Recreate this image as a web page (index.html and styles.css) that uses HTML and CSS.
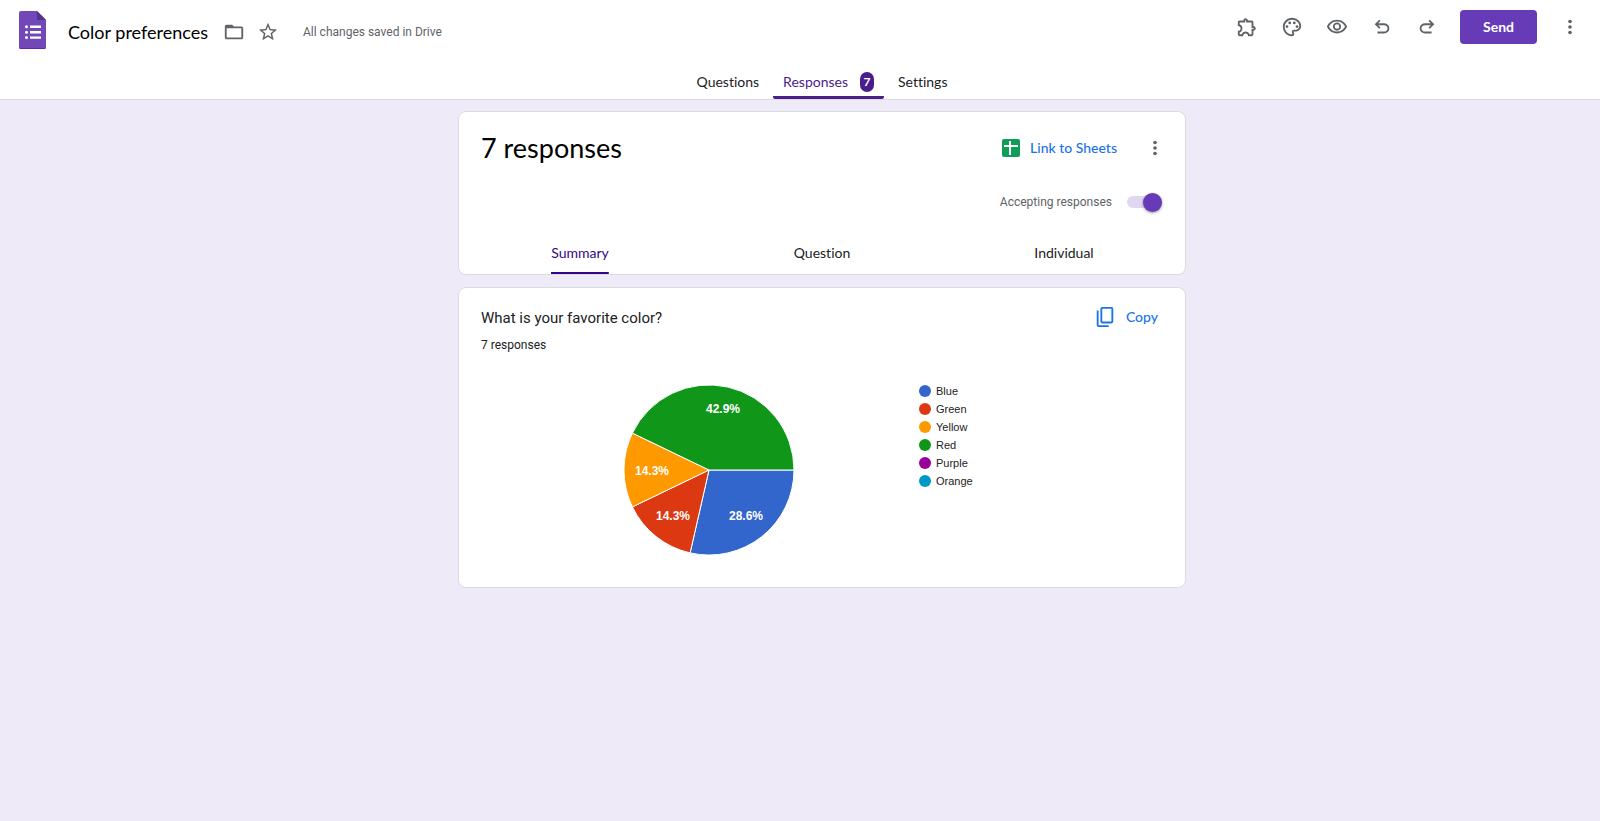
FILE: index.html
```
<!DOCTYPE html>
<html lang="en">
<head>
    <meta charset="UTF-8">
    <meta name="viewport" content="width=device-width, initial-scale=1.0">
    <title>Color preferences</title>
    <link rel="stylesheet" href="styles.css">
</head>
<body>

    <header class="header">
        <div class="topbar">
            <div class="doc">
                <a class="logo" href="#" aria-label="Forms home">
                    <svg width="27" height="38" viewBox="0 0 27 38">
                        <path d="M2 0H18L27 9V36a2 2 0 0 1-2 2H2a2 2 0 0 1-2-2V2a2 2 0 0 1 2-2z" fill="#7248b9"/>
                        <path d="M18 0L27 9H18z" fill="#4f328c"/>
                        <path d="M0 36a2 2 0 0 0 2 2H25a2 2 0 0 0 2-2v-.7a2 2 0 0 1-2 2H2a2 2 0 0 1-2-2z" fill="#5c1fb0"/>
                        <path d="M11 14.5h11v2.4H11zM11 20h11v2.4H11zM11 25.4h11v2.4H11z" fill="#fff"/>
                        <g fill="#fff">
                            <circle cx="7.5" cy="15.7" r="1.5"/>
                            <circle cx="7.5" cy="21.2" r="1.5"/>
                            <circle cx="7.5" cy="26.6" r="1.5"/>
                        </g>
                    </svg>
                </a>
                <div class="doc-info">
                    <h1 class="doc-title">Color preferences</h1>
                    <button class="icon-btn" type="button" aria-label="Move to folder">
                        <svg class="icon" viewBox="0 0 24 24"><path d="M20 6h-8l-2-2H4c-1.100 0-2 .9-2 2v12c0 1.100.9 2 2 2h16c1.100 0 2-.9 2-2V8c0-1.100-.9-2-2-2zm0 12H4V8h16v10z"/></svg>
                    </button>
                    <button class="icon-btn" type="button" aria-label="Star">
                        <svg class="icon" viewBox="0 0 24 24"><path d="M22 9.240l-7.190-.62L12 2 9.190 8.630 2 9.240l5.460 4.730L5.820 21 12 17.270 18.180 21l-1.630-7.030L22 9.240zM12 15.400l-3.760 2.270 1-4.280-3.320-2.880 4.380-.38L12 6.100l1.710 4.040 4.380.38-3.320 2.880 1 4.280L12 15.400z"/></svg>
                    </button>
                    <span class="saved">All changes saved in Drive</span>
                </div>
            </div>

            <div class="actions">
                <div class="tools">
                    <button class="icon-btn" type="button" aria-label="Add-ons">
                        <svg class="icon" viewBox="0 0 24 24"><path d="M10.500 4.500c.28 0 .5.22.5.5v2h6v6h2c.28 0 .5.22.5.5s-.22.5-.5.5h-2v6h-2.120c-.68-1.750-2.390-3-4.380-3s-3.700 1.250-4.380 3H4v-2.120c1.750-.68 3-2.390 3-4.380 0-1.990-1.240-3.700-2.990-4.380L4 7h6V5c0-.28.22-.5.5-.5m0-2C9.120 2.500 8 3.620 8 5H4c-1.100 0-1.990.9-1.990 2v3.800h.29c1.490 0 2.700 1.210 2.700 2.700s-1.210 2.700-2.700 2.700H2V20c0 1.100.9 2 2 2h3.800v-.3c0-1.490 1.210-2.700 2.700-2.700s2.700 1.210 2.700 2.700v.3H17c1.100 0 2-.9 2-2v-4c1.380 0 2.500-1.120 2.500-2.500S20.380 11 19 11V7c0-1.100-.9-2-2-2h-4c0-1.380-1.120-2.500-2.500-2.500z"/></svg>
                    </button>
                    <button class="icon-btn" type="button" aria-label="Customize theme">
                        <svg class="icon" viewBox="0 0 24 24">
                            <path d="M12 22C6.490 22 2 17.510 2 12S6.490 2 12 2s10 4.040 10 9c0 3.310-2.690 6-6 6h-1.770c-.28 0-.5.22-.5.5 0 .12.05.23.13.33.41.47.64 1.060.64 1.670A2.500 2.500 0 0 1 12 22zm0-18c-4.410 0-8 3.590-8 8s3.590 8 8 8c.28 0 .5-.22.5-.5a.54.54 0 0 0-.14-.35c-.41-.46-.63-1.050-.63-1.650a2.500 2.500 0 0 1 2.500-2.500H16c2.210 0 4-1.790 4-4 0-3.860-3.590-7-8-7z"/>
                            <circle cx="6.500" cy="11.500" r="1.500"/>
                            <circle cx="9.500" cy="7.500" r="1.500"/>
                            <circle cx="14.500" cy="7.500" r="1.500"/>
                            <circle cx="17.500" cy="11.500" r="1.500"/>
                        </svg>
                    </button>
                    <button class="icon-btn" type="button" aria-label="Preview">
                        <svg class="icon" viewBox="0 0 24 24"><path d="M12 6c3.790 0 7.170 2.130 8.820 5.500C19.170 14.870 15.790 17 12 17s-7.170-2.130-8.820-5.500C4.830 8.130 8.210 6 12 6m0-2C7 4 2.730 7.110 1 11.500 2.730 15.890 7 19 12 19s9.270-3.110 11-7.500C21.270 7.110 17 4 12 4zm0 5a2.500 2.500 0 0 1 0 5 2.500 2.500 0 0 1 0-5m0-2c-2.480 0-4.500 2.020-4.500 4.500S9.520 16 12 16s4.500-2.020 4.500-4.500S14.480 7 12 7z"/></svg>
                    </button>
                    <button class="icon-btn" type="button" aria-label="Undo">
                        <svg class="icon" viewBox="0 0 24 24"><path d="M7 19v-2h7.100q1.575 0 2.738-1T18 13.500T16.838 11T14.100 10H7.800l2.600 2.600L9 14L4 9l5-5l1.400 1.400L7.800 8h6.300q2.425 0 4.163 1.575T20 13.500t-1.737 3.925T14.100 19z"/></svg>
                    </button>
                    <button class="icon-btn" type="button" aria-label="Redo">
                        <svg class="icon" viewBox="0 0 24 24"><path d="M9.900 19q-2.425 0-4.163-1.575T4 13.500t1.737-3.925T9.900 8h6.300l-2.600-2.600L15 4l5 5l-5 5l-1.400-1.400l2.600-2.600H9.900q-1.575 0-2.738 1T6 13.500T7.162 16T9.900 17H17v2z"/></svg>
                    </button>
                </div>
                <button class="send" type="button">Send</button>
                <button class="icon-btn" type="button" aria-label="More">
                    <svg class="icon" viewBox="0 0 24 24"><circle cx="12" cy="6" r="2"/><circle cx="12" cy="12" r="2"/><circle cx="12" cy="18" r="2"/></svg>
                </button>
            </div>
        </div>

        <nav class="tabs">
            <a class="tab" href="#questions">Questions</a>
            <a class="tab tab-on" href="#responses">Responses <span class="count">7</span></a>
            <a class="tab" href="#settings">Settings</a>
        </nav>
    </header>

    <main class="main">
        <section class="card">
            <div class="card-head">
                <h2 class="total">7 responses</h2>
                <div class="card-actions">
                    <button class="link-btn" type="button">
                        <svg width="18" height="18" viewBox="0 0 18 18">
                            <rect width="18" height="18" rx="2" fill="#0f9d58"/>
                            <path d="M2 6h14v2H9v8H7V8H2zM7 2h2v4H7z" fill="#fff"/>
                        </svg>
                        Link to Sheets
                    </button>
                    <button class="icon-btn" type="button" aria-label="More options">
                        <svg class="icon" viewBox="0 0 24 24"><circle cx="12" cy="6" r="2"/><circle cx="12" cy="12" r="2"/><circle cx="12" cy="18" r="2"/></svg>
                    </button>
                </div>
            </div>
            <div class="accept">
                <label for="accepting">Accepting responses</label>
                <input class="switch" id="accepting" type="checkbox" role="switch" checked>
            </div>
            <nav class="views">
                <a class="view view-on" href="#summary">Summary</a>
                <a class="view" href="#question">Question</a>
                <a class="view" href="#individual">Individual</a>
            </nav>
        </section>

        <section class="card">
            <div class="question-head">
                <div>
                    <h3 class="question">What is your favorite color?</h3>
                    <p class="answers">7 responses</p>
                </div>
                <button class="link-btn" type="button">
                    <svg width="22" height="22" viewBox="0 0 24 24" fill="#1a73e8"><path d="M19 1H9a2 2 0 0 0-2 2v14a2 2 0 0 0 2 2h10a2 2 0 0 0 2-2V3a2 2 0 0 0-2-2zm0 16H9V3h10zM3 5v16a2 2 0 0 0 2 2h11v-2H5V5z"/></svg>
                    Copy
                </button>
            </div>
            <div class="chart">
                <svg class="pie" viewBox="-85 -85 170 170" role="img" aria-label="Favorite color, share of responses">
                    <g stroke="#fff">
                        <path d="M0 0H85A85 85 0 0 1-18.900 82.900z" fill="#3366cc"/>
                        <path d="M0 0L-18.900 82.900A85 85 0 0 1-76.600 36.900z" fill="#dc3912"/>
                        <path d="M0 0L-76.600 36.900A85 85 0 0 1-76.600-36.900z" fill="#ff9900"/>
                        <path d="M0 0L-76.600-36.900A85 85 0 0 1 85 0z" fill="#109618"/>
                    </g>
                    <g class="pie-labels">
                        <text x="14" y="-57">42.9%</text>
                        <text x="-57" y="5">14.3%</text>
                        <text x="-36" y="50">14.3%</text>
                        <text x="37" y="50">28.6%</text>
                    </g>
                </svg>
                <ul class="legend">
                    <li class="blue">Blue</li>
                    <li class="green">Green</li>
                    <li class="yellow">Yellow</li>
                    <li class="red">Red</li>
                    <li class="purple">Purple</li>
                    <li class="orange">Orange</li>
                </ul>
            </div>
        </section>
    </main>

</body>
</html>
```
FILE: styles.css
```
* {box-sizing:border-box;}
body {
    margin:0;
    min-height:100vh;
    background:#eeeaf8;
    color:#202124;
    font-family:Roboto, sans-serif;
}
h1, h2, h3, p, ul {margin:0; padding:0; font-weight:400;}
a {color:inherit; text-decoration:none;}
button {
    padding:0;
    border:0;
    background:none;
    font:inherit;
    cursor:pointer;
}
svg {display:block;}

.header {
    background:#fff;
    border-bottom:1px solid #dadce0;
}
.topbar {
    display:flex;
    justify-content:space-between;
    align-items:flex-start;
    padding:10px 19px 0;
}
.doc {
    display:flex;
    padding-top:1px;
}
.doc-info {
    display:flex;
    align-items:center;
    padding-top:3px;
}
.doc-title {
    margin:0 15px 0 22px;
    color:#000;
    font:18px/24px Lato, sans-serif;
}
.icon {width:22px; height:22px; fill:#5f6368;}
.icon-btn + .icon-btn {margin-left:12px;}
.saved {margin-left:24px; color:#5f6368; font-size:12px;}
.actions {display:flex; align-items:center; gap:22px;}
.tools {display:flex; gap:23px;}
.tools .icon-btn + .icon-btn {margin-left:0;}
.send {
    width:77px;
    height:34px;
    border-radius:4px;
    background:#673ab7;
    color:#fff;
    font:bold 14px/34px Lato, sans-serif;
}

/* content is centred a little right of the window's middle */
.tabs {
    display:flex;
    justify-content:center;
    gap:4px;
    padding:16px 0 0 44px;
}
.tab {
    display:flex;
    align-items:center;
    gap:12px;
    height:34px;
    padding:0 10px;
    font:14px/20px Lato, sans-serif;
}
.tab-on {
    background:linear-gradient(#4a1d8c, #4a1d8c) bottom / 100% 3px no-repeat;
    border-radius:2px;
    color:#4a1d8c;
}
.count {
    width:14px;
    border-radius:7px;
    background:#4a1d8c;
    color:#fff;
    font-size:12px;
    font-weight:700;
    text-align:center;
}

.main {
    display:flex;
    flex-direction:column;
    align-items:center;
    gap:12px;
    padding:11px 0 24px 44px;
}
.card {
    width:100%;
    max-width:728px;
    border:1px solid #dadce0;
    border-radius:8px;
    background:#fff;
}
.card-head {
    display:flex;
    justify-content:space-between;
    align-items:center;
    padding:18px 19px 0 22px;
}
.total {color:#000; font:27px/36px Lato, sans-serif;}
.card-actions {display:flex; align-items:center; gap:27px;}
.link-btn {
    display:flex;
    align-items:center;
    gap:10px;
    color:#1a73e8;
    font:500 14px/20px Lato, sans-serif;
}
.accept {
    display:flex;
    justify-content:flex-end;
    align-items:center;
    gap:15px;
    padding:26px 23px 0;
    color:#5f6368;
    font-size:12px;
    line-height:20px;
}
.switch {
    appearance:none;
    display:flex;
    align-items:center;
    justify-content:flex-end;
    width:35px;
    height:12px;
    margin:0;
    border-radius:6px;
    background:#e0d8f1;
}
.switch::before {
    content:"";
    width:19px;
    height:19px;
    flex:none;
    border-radius:50%;
    background:#673ab7;
    box-shadow:0 1px 3px rgba(0,0,0,0.4);
}
.views {
    display:grid;
    grid-template-columns:repeat(3, 1fr);
    justify-items:center;
    padding-top:20px;
}
.view {
    height:42px;
    font:14px/42px Lato, sans-serif;
}
.view-on {
    background:linear-gradient(#34068c, #34068c) bottom / 100% 2px no-repeat;
    color:#34068c;
}
.tab, .view {font-variant-ligatures:none;}

.question-head {
    display:flex;
    justify-content:space-between;
    align-items:flex-start;
    padding:18px 27px 0 22px;
}
.question {color:#202124; font-size:15px; line-height:24px;}
.answers {padding-top:6px; font-size:12px; line-height:18px;}
.chart {
    display:flex;
    align-items:flex-start;
    gap:125px;
    padding:28px 22px 32px 165px;
}
.pie {width:170px; height:170px; margin-top:3px; flex:none;}
.pie-labels {
    fill:#fff;
    font:bold 12px "Liberation Sans", sans-serif;
    text-anchor:middle;
}
.legend {
    list-style:none;
    color:#222;
    font:11px/18px "Liberation Sans", sans-serif;
}
.legend li {display:flex; align-items:center; gap:5px;}
.legend li::before {
    content:"";
    width:12px;
    height:12px;
    border-radius:50%;
    background:currentColor;
}
.legend .blue::before {background:#3366cc;}
.legend .green::before {background:#dc3912;}
.legend .yellow::before {background:#ff9900;}
.legend .red::before {background:#109618;}
.legend .purple::before {background:#990099;}
.legend .orange::before {background:#0099c6;}
```
